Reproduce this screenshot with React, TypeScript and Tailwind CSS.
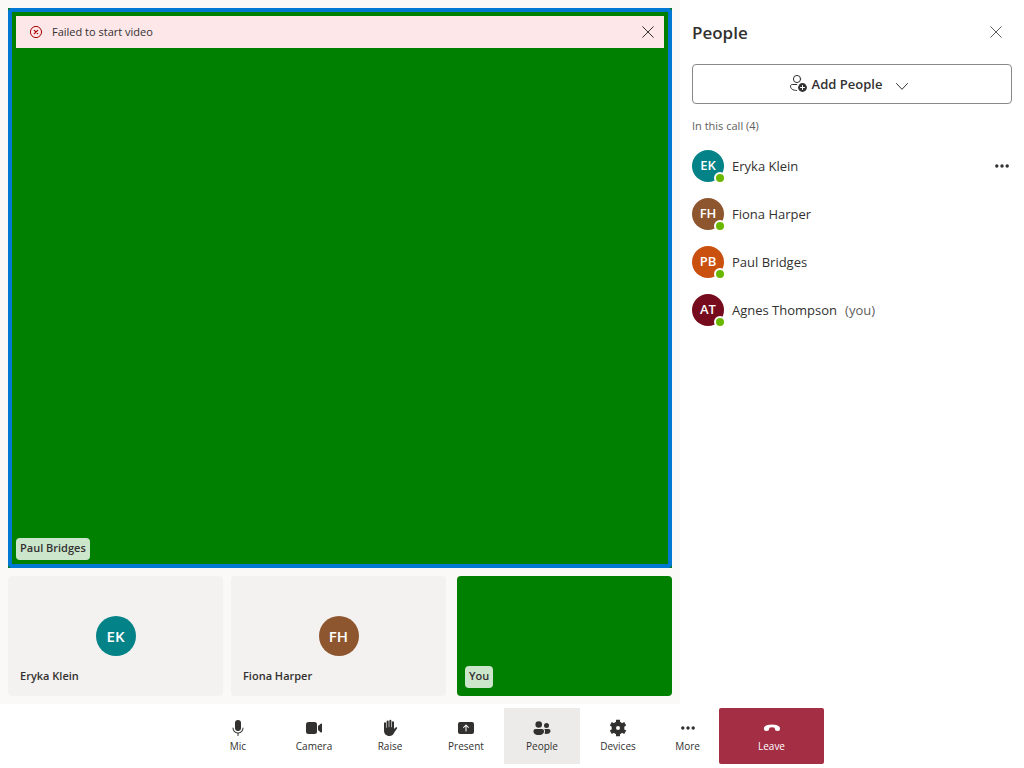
import React from "react";
import { clsx } from "clsx";

type IconProps = { className?: string };

function Svg({ className, children }: IconProps & { children: React.ReactNode }) {
  return (
    <svg viewBox="0 0 20 20" fill="currentColor" aria-hidden="true" className={clsx("size-5 shrink-0", className)}>
      {children}
    </svg>
  );
}

const MicIcon = () => (
  <Svg>
    <path d="M10 13a3 3 0 0 0 3-3V5a3 3 0 0 0-6 0v5a3 3 0 0 0 3 3ZM5 9.5c.28 0 .5.22.5.5a4.5 4.5 0 1 0 9 0 .5.5 0 0 1 1 0 5.5 5.5 0 0 1-5 5.48v2.02a.5.5 0 0 1-1 0v-2.02A5.5 5.5 0 0 1 4.5 10c0-.28.22-.5.5-.5Z" />
  </Svg>
);

const CameraIcon = () => (
  <Svg>
    <path d="M13 6.5A2.5 2.5 0 0 0 10.5 4h-6A2.5 2.5 0 0 0 2 6.5v7A2.5 2.5 0 0 0 4.5 16h6a2.5 2.5 0 0 0 2.5-2.5v-7Zm1 1.43v4.15l2.76 2.35a.75.75 0 0 0 1.24-.57V6.2a.75.75 0 0 0-1.24-.57L14 7.93Z" />
  </Svg>
);

const HandIcon = () => (
  <Svg>
    <path d="M4 5.2a1 1 0 0 1 2 0V9.5a.3.3 0 0 0 .6 0V3.5a1.05 1.05 0 0 1 2.1 0V9a.3.3 0 0 0 .6 0V2.9a1.05 1.05 0 0 1 2.1 0V9a.3.3 0 0 0 .6 0V4.2a1 1 0 0 1 2 0v6.9l1-1.1c.5-.7 1.1-1 1.8-.7.5.2.5.7.2 1.1l-2.9 4.4C13.1 16.9 11.7 18 9.5 18 6 18 4 15.7 4 12.5Z" />
  </Svg>
);

const PresentIcon = () => (
  <Svg>
    <path
      fillRule="evenodd"
      d="M4 4a2 2 0 0 0-2 2v8c0 1.1.9 2 2 2h12a2 2 0 0 0 2-2V6a2 2 0 0 0-2-2H4Zm6.35 2.65 2.5 2.5a.5.5 0 0 1-.7.7L10.5 8.2v4.8a.5.5 0 0 1-1 0V8.2L7.85 9.85a.5.5 0 0 1-.7-.7l2.5-2.5a.5.5 0 0 1 .7 0Z"
    />
  </Svg>
);

const PeopleIcon = () => (
  <Svg>
    <circle cx="6.75" cy="6.5" r="3.3" />
    <circle cx="14.5" cy="7.5" r="2.5" />
    <path d="M1.5 13c0-1.1.9-2 2-2H10a2 2 0 0 1 2 2v.4S12 17 6.75 17 1.5 13.4 1.5 13.4V13ZM13 13c0-.75-.27-1.46-.73-2h4.23a2 2 0 0 1 2 2s0 3-4 3c-.9 0-1.6-.15-2.17-.38.4-.6.67-1.3.67-2.22V13Z" />
  </Svg>
);

const DevicesIcon = () => (
  <Svg>
    <g fill="none" stroke="currentColor">
      <circle cx="10" cy="10" r="4.2" strokeWidth="4.4" />
      <g strokeWidth="4">
        <path d="M10 1.7v3M10 18.3v-3M2.8 5.85l2.6 1.5M17.2 14.15l-2.6-1.5M2.8 14.15l2.6-1.5M17.2 5.85l-2.6 1.5" />
      </g>
    </g>
  </Svg>
);

const MoreIcon = ({ className }: IconProps) => (
  <Svg className={className}>
    <circle cx="4.8" cy="10" r="1.7" />
    <circle cx="10" cy="10" r="1.7" />
    <circle cx="15.2" cy="10" r="1.7" />
  </Svg>
);

const LeaveIcon = () => (
  <Svg>
    <path d="m17.96 10.94-.16.83c-.15.78-.87 1.28-1.68 1.2l-1.63-.16c-.7-.07-1.24-.58-1.45-1.31-.28-1-.52-1.75-.52-1.75A6 6 0 0 0 10 9.25a6 6 0 0 0-2.52.5s-.25.75-.52 1.75c-.2.73-.68 1.24-1.38 1.31l-1.62.16c-.8.08-1.56-.42-1.79-1.2l-.24-.84c-.24-.84-.03-1.64.58-2.2C3.96 7.4 6.56 6.5 9.99 6.5c3.44 0 5.78.85 7.3 2.2.6.53.85 1.44.67 2.24Z" />
  </Svg>
);

const CloseIcon = ({ className }: IconProps) => (
  <svg viewBox="0 0 16 16" fill="none" stroke="currentColor" strokeLinecap="round" aria-hidden="true" className={clsx("size-4", className)}>
    <path d="m2.7 2.7 10.6 10.6M13.3 2.7 2.7 13.3" />
  </svg>
);

const ErrorIcon = () => (
  <svg viewBox="0 0 16 16" fill="none" stroke="currentColor" strokeLinecap="round" aria-hidden="true" className="size-4">
    <circle cx="8" cy="8" r="5.6" />
    <path d="m6.3 6.3 3.4 3.4M9.7 6.3 6.3 9.7" strokeWidth="1.2" />
  </svg>
);

const AddPeopleIcon = () => (
  <Svg>
    <g fill="none" stroke="currentColor" strokeLinecap="round">
      <circle cx="9" cy="5" r="3.6" />
      <path d="M8.8 10.5H4.2c-.9 0-1.7.7-1.7 1.6 0 2.7 2.3 4.3 6 4.4" />
    </g>
    <circle cx="14.5" cy="13.5" r="4.4" />
    <path d="M14.5 11.5v4M12.5 13.5h4" stroke="white" strokeLinecap="round" />
  </Svg>
);

const ChevronIcon = () => (
  <svg viewBox="0 0 16 16" fill="none" stroke="currentColor" strokeLinecap="round" strokeLinejoin="round" aria-hidden="true" className="size-4">
    <path d="m2.5 7.5 5.5 5.8 5.5-5.8" />
  </svg>
);

type Person = { name: string; initials: string; color: string; you?: boolean; menu?: boolean };

const people: Person[] = [
  { name: "Eryka Klein", initials: "EK", color: "bg-[#038387]", menu: true },
  { name: "Fiona Harper", initials: "FH", color: "bg-[#8e562e]" },
  { name: "Paul Bridges", initials: "PB", color: "bg-[#ca5010]" },
  { name: "Agnes Thompson", initials: "AT", color: "bg-[#750b1c]", you: true },
];

function Avatar({ person, large }: { person: Person; large?: boolean }) {
  return (
    <div
      className={clsx(
        "flex shrink-0 items-center justify-center rounded-full font-semibold text-white",
        large ? "size-10 text-[15px]" : "size-8 text-[13px]",
        person.color,
      )}
    >
      {person.initials}
    </div>
  );
}

function NameTag({ children }: { children: React.ReactNode }) {
  return (
    <div className="rounded bg-white/80 px-1 pt-0.5 pb-1 text-[11px] leading-4 font-semibold">{children}</div>
  );
}

function RemoteTile({ person }: { person: Person }) {
  return (
    <div className="flex flex-col items-center rounded bg-[#f3f2f1] px-3 pt-10 pb-3">
      <Avatar person={person} large />
      <div className="mt-auto w-full text-[11px] leading-4 font-semibold">{person.name}</div>
    </div>
  );
}

function PersonRow({ person }: { person: Person }) {
  return (
    <li className="flex h-12 items-center gap-2">
      <div className="relative">
        <Avatar person={person} />
        <span className="absolute -right-0.5 -bottom-0.5 size-3 rounded-full border-2 border-white bg-[#6bb700]" />
      </div>
      <span className="pt-0.5 text-[13px]">{person.name}</span>
      {person.you && <span className="pt-0.5 text-[13px] text-[#605e5c]">(you)</span>}
      {person.menu && (
        <button type="button" aria-label="More options" className="ml-auto">
          <MoreIcon />
        </button>
      )}
    </li>
  );
}

const controls = [
  { label: "Mic", icon: <MicIcon />, style: "w-[76px]" },
  { label: "Camera", icon: <CameraIcon />, style: "w-[76px]" },
  { label: "Raise", icon: <HandIcon />, style: "w-[76px]" },
  { label: "Present", icon: <PresentIcon />, style: "w-[76px]" },
  { label: "People", icon: <PeopleIcon />, style: "w-[76px] bg-[#edebe9]" },
  { label: "Devices", icon: <DevicesIcon />, style: "w-[76px]" },
  { label: "More", icon: <MoreIcon />, style: "w-[63px]" },
  { label: "Leave", icon: <LeaveIcon />, style: "w-[105px] rounded-xs bg-[#a42e43] text-white" },
];

export default function App() {
  return (
    <div className="flex min-h-screen flex-col bg-white font-['Open_Sans','Noto_Sans',sans-serif] text-[#323130]">
      <div className="flex flex-1">
        <main className="flex min-w-0 flex-1 flex-col gap-2 bg-[#faf9f8] p-2">
          <section className="flex flex-1 bg-[#008000]">
            <div className="flex flex-1 flex-col items-start justify-between rounded border-4 border-[#0078d4] p-1">
              <div role="alert" className="flex h-8 w-full items-center bg-[#fde7e9] px-3">
                <span className="text-[#a80000]">
                  <ErrorIcon />
                </span>
                <span className="ml-2 text-[11px]">Failed to start video</span>
                <button type="button" aria-label="Close" className="-mr-1 ml-auto">
                  <CloseIcon />
                </button>
              </div>
              <NameTag>Paul Bridges</NameTag>
            </div>
          </section>
          <section className="flex h-[120px] gap-[11px]">
            <div className="grid flex-1 grid-cols-2 gap-2">
              <RemoteTile person={people[0]} />
              <RemoteTile person={people[1]} />
            </div>
            <div className="flex w-[215px] items-end rounded bg-[#008000] p-2">
              <NameTag>You</NameTag>
            </div>
          </section>
        </main>
        <aside className="flex w-[344px] flex-col px-3 pt-4">
          <div className="flex h-8 items-center justify-between pr-2">
            <h2 className="pt-0.5 text-[17px] font-semibold">People</h2>
            <button type="button" aria-label="Close people pane" className="text-[#605e5c]">
              <CloseIcon />
            </button>
          </div>
          <button
            type="button"
            className="mt-4 flex h-10 items-center justify-center rounded border border-[#8a8886] pr-1.5 text-[13px] font-semibold"
          >
            <AddPeopleIcon />
            <span className="mr-3 ml-1 pt-0.5">Add People</span>
            <ChevronIcon />
          </button>
          <h3 className="mt-3.5 text-[11px] leading-4 text-[#605e5c]">In this call (4)</h3>
          <ul className="mt-2">
            {people.map((person) => (
              <PersonRow key={person.name} person={person} />
            ))}
          </ul>
        </aside>
      </div>
      <nav aria-label="Call controls" className="flex justify-center py-1">
        {controls.map((control) => (
          <button
            key={control.label}
            type="button"
            className={clsx("flex h-14 flex-col items-center justify-center text-[10px] leading-4", control.style)}
          >
            {control.icon}
            {control.label}
          </button>
        ))}
      </nav>
    </div>
  );
}
